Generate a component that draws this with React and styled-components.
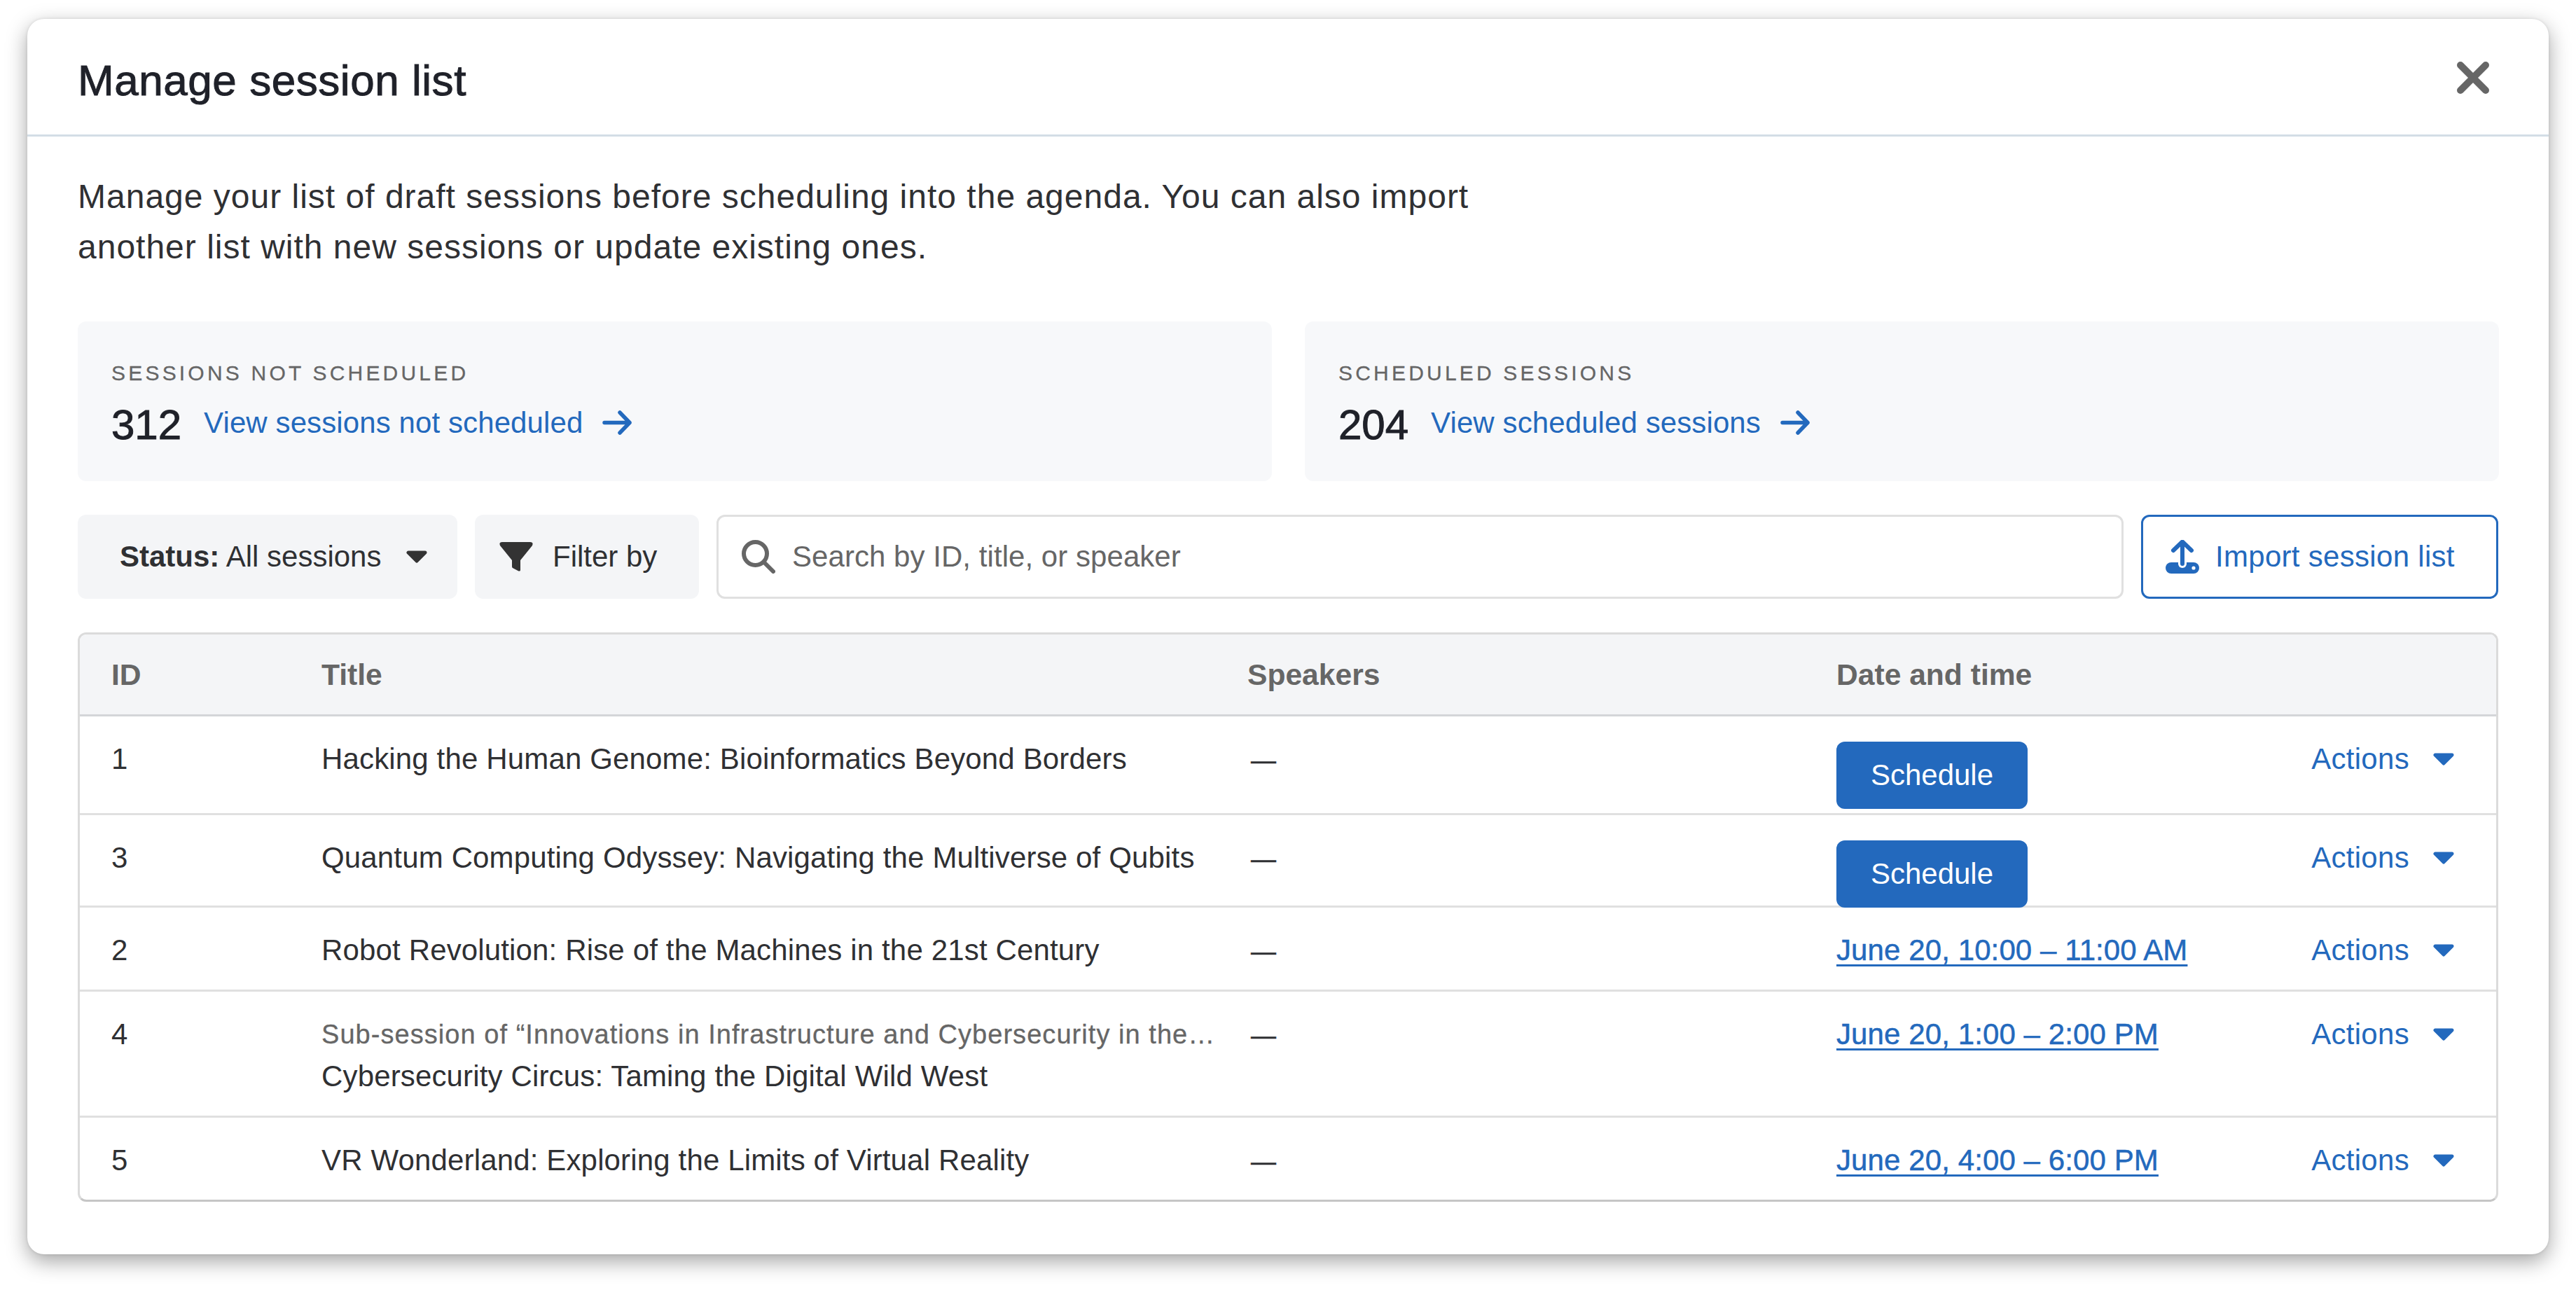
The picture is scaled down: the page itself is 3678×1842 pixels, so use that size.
import React from "react";
import styled, { createGlobalStyle, css } from "styled-components";

const Global = createGlobalStyle`
  html, body { margin: 0; padding: 0; background: #fff; }
  body { font-family: "Liberation Sans", Arial, sans-serif; }
  * { box-sizing: border-box; }
`;

const medium = css`
  -webkit-text-stroke: 1px currentColor;
`;

const BLUE = "#2369bd";

const Page = styled.div`
  width: 3678px;
  height: 1842px;
  padding: 27px 39px 51px;
  overflow: hidden;
`;

const Dialog = styled.section`
  width: 3600px;
  height: 1764px;
  background: #fff;
  border-radius: 24px;
  box-shadow: 0 10px 30px rgba(0, 0, 0, 0.36), 0 0 4px rgba(0, 0, 0, 0.1);
  display: flex;
  flex-direction: column;
`;

const Header = styled.header`
  height: 168px;
  flex: none;
  display: flex;
  justify-content: space-between;
  align-items: flex-start;
  padding: 48px 85px 0 72px;
  border-bottom: 3px solid #d3dde6;
`;

const Heading = styled.h1`
  margin: 0;
  font-size: 62px;
  line-height: 80px;
  font-weight: 400;
  color: #1f2129;
  ${medium}
  letter-spacing: 0.55px;
`;

const CloseButton = styled.button`
  margin-top: 13px;
  padding: 0;
  width: 46px;
  height: 46px;
  border: 0;
  background: none;
  display: block;
`;

const Body = styled.div`
  flex: 1;
  padding: 50px 72px 75px 72px;
  display: flex;
  flex-direction: column;
`;

const Intro = styled.p`
  margin: 0 0 70px;
  width: 2050px;
  font-size: 48px;
  line-height: 72px;
  color: #2f3033;
  letter-spacing: 1px;
`;

const Stats = styled.div`
  display: grid;
  grid-template-columns: 1705px 1705px;
  column-gap: 47px;
  margin-bottom: 48px;
`;

const StatCard = styled.div`
  height: 228px;
  background: #f7f8fa;
  border-radius: 12px;
  padding: 56px 48px 0;
`;

const StatLabel = styled.div`
  font-size: 30px;
  line-height: 36px;
  letter-spacing: 4.2px;
  color: #666;
  margin-bottom: 21px;
  -webkit-text-stroke: 0.3px currentColor;
`;

const StatRow = styled.div`
  height: 70px;
  display: flex;
  align-items: center;
  gap: 32px;
`;

const StatNumber = styled.span`
  font-size: 60px;
  line-height: 70px;
  color: #1f2129;
  ${medium}
`;

const StatLink = styled.a`
  display: inline-flex;
  align-items: center;
  gap: 28px;
  margin-bottom: 7px;
  font-size: 42px;
  line-height: 50px;
  color: ${BLUE};
  letter-spacing: 0.1px;
`;

const Toolbar = styled.div`
  display: flex;
  height: 120px;
  gap: 25px;
  margin-bottom: 48px;
`;

const GreyButton = styled.button`
  height: 120px;
  flex: none;
  border: 0;
  border-radius: 12px;
  background: #f4f5f7;
  display: flex;
  align-items: center;
  font-family: inherit;
  font-size: 42px;
  color: #2f3033;
`;

const StatusButton = styled(GreyButton)`
  width: 542px;
  padding: 0 43px 0 60px;
  justify-content: space-between;
  b {
    font-weight: 700;
  }
`;

const FilterButton = styled(GreyButton)`
  width: 320px;
  padding: 0 0 0 35px;
  gap: 28px;
`;

const SearchBox = styled.label`
  flex: 1;
  height: 120px;
  display: flex;
  align-items: center;
  gap: 24px;
  padding: 0 33px;
  border: 3px solid #e0e0e0;
  border-radius: 12px;
`;

const SearchInput = styled.input`
  flex: 1;
  border: 0;
  outline: 0;
  background: none;
  padding: 0;
  font-family: inherit;
  font-size: 42px;
  letter-spacing: 0.05px;
  color: #666;
  &::placeholder {
    color: #666;
    opacity: 1;
  }
`;

const ImportButton = styled.button`
  width: 510px;
  height: 120px;
  flex: none;
  border: 3px solid ${BLUE};
  border-radius: 12px;
  background: #fff;
  display: flex;
  align-items: center;
  gap: 23px;
  padding: 0 0 0 32px;
  font-family: inherit;
  font-size: 42px;
  letter-spacing: 0.3px;
  color: ${BLUE};
`;

const Table = styled.div`
  width: 3456px;
  border: 3px solid #dbdbdb;
  border-bottom-color: #c6c6c6;
  border-radius: 12px;
`;

const HeadRow = styled.div`
  height: 117px;
  display: grid;
  grid-template-columns: 300px 1322px 841px 1fr;
  align-items: center;
  padding-left: 45px;
  background: #f4f5f7;
  border-bottom: 3px solid #d4d5d8;
  border-radius: 9px 9px 0 0;
`;

const HeadCell = styled.div`
  font-size: 42.6px;
  font-weight: 700;
  color: #666;
`;

const Row = styled.div`
  height: ${(p) => p.$h}px;
  display: grid;
  grid-template-columns: 300px 1322px 841px 1fr auto;
  align-items: start;
  padding: 36px 60px 0 45px;
  border-bottom: 3px solid #e0e0e0;
  &:last-child {
    border-bottom: 0;
  }
`;

const Cell = styled.div`
  font-size: 42px;
  line-height: 50px;
  color: #2f3033;
  letter-spacing: 0.15px;
  white-space: nowrap;
`;

const Sub = styled.div`
  font-size: 38px;
  line-height: 50px;
  color: #666;
  letter-spacing: 1.05px;
  margin-bottom: 10px;
  -webkit-text-stroke: 0.3px currentColor;
`;

const Dash = styled.span`
  display: inline-block;
  padding-left: 5px;
  font-size: 36px;
  line-height: 44px;
  -webkit-text-stroke: 0.4px currentColor;
`;

const ScheduleButton = styled.button`
  position: relative;
  z-index: 1;
  width: 273px;
  height: 96px;
  border: 0;
  border-radius: 12px;
  background: ${BLUE};
  color: #fff;
  font-family: inherit;
  font-size: 42px;
  display: block;
`;

const DateLink = styled.a`
  color: ${BLUE};
  letter-spacing: 0.1px;
  text-decoration: underline;
  text-decoration-thickness: 3px;
  text-underline-offset: 6px;
  -webkit-text-stroke: 0.5px currentColor;
`;

const Actions = styled.a`
  display: flex;
  align-items: center;
  gap: 34px;
  color: ${BLUE};
  font-size: 42px;
  line-height: 50px;
  letter-spacing: 0.3px;
`;

const Caret = ({ color }) => (
  <svg width="30" height="18" viewBox="0 0 30 18" style={{ display: "block", flex: "none" }}>
    <path d="M3 3 H27 L15 15 Z" fill={color} stroke={color} strokeWidth="5" strokeLinejoin="round" />
  </svg>
);

const Arrow = () => (
  <svg width="42" height="35" viewBox="0 0 42 35" fill="none" stroke={BLUE} strokeWidth="5.5" strokeLinecap="round" strokeLinejoin="round">
    <path d="M3 17.5 H39 M25 3 L39 17.5 L25 32" />
  </svg>
);

const FilterIcon = () => (
  <svg width="48" height="42" viewBox="0 0 48 42" style={{ flex: "none" }}>
    <path
      d="M4 0 H44 Q49 0 47 5 L30 26 V40 Q30 42 27.5 41.5 L19 37 Q18 36.5 18 35 V26 L1 5 Q-1 0 4 0 Z"
      fill="#333"
    />
  </svg>
);

const SearchIcon = () => (
  <svg width="48" height="48" viewBox="0 0 48 48" fill="none" stroke="#666" strokeWidth="6" strokeLinecap="round" style={{ flex: "none" }}>
    <circle cx="19.5" cy="19.5" r="16.5" />
    <path d="M32 32 L45 45" />
  </svg>
);

const ImportIcon = () => (
  <svg width="48" height="48" viewBox="0 0 48 48" style={{ flex: "none" }}>
    <rect x="0" y="32" width="48" height="16" rx="8" fill={BLUE} />
    <circle cx="40" cy="40" r="2.6" fill="#fff" />
    <path d="M24 24 V34" stroke="#fff" strokeWidth="12" strokeLinecap="round" fill="none" />
    <path d="M24 3 V34 M11 15 L24 2.5 L37 15" stroke={BLUE} strokeWidth="6" strokeLinecap="round" strokeLinejoin="round" fill="none" />
  </svg>
);

const CloseIcon = () => (
  <svg width="46" height="46" viewBox="0 0 46 46" stroke="#666" strokeWidth="10" strokeLinecap="round" style={{ display: "block" }}>
    <path d="M5 5 L41 41 M41 5 L5 41" />
  </svg>
);

const rows = [
  { id: 1, h: 141, title: "Hacking the Human Genome: Bioinformatics Beyond Borders" },
  { id: 3, h: 132, title: "Quantum Computing Odyssey: Navigating the Multiverse of Qubits" },
  { id: 2, h: 120, title: "Robot Revolution: Rise of the Machines in the 21st Century", date: "June 20, 10:00 – 11:00 AM" },
  {
    id: 4,
    h: 180,
    sub: "Sub-session of “Innovations in Infrastructure and Cybersecurity in the…",
    title: "Cybersecurity Circus: Taming the Digital Wild West",
    date: "June 20, 1:00 – 2:00 PM",
  },
  { id: 5, h: 117, title: "VR Wonderland: Exploring the Limits of Virtual Reality", date: "June 20, 4:00 – 6:00 PM" },
];

export default function App() {
  return (
    <Page>
      <Global />
      <Dialog>
        <Header>
          <Heading>Manage session list</Heading>
          <CloseButton aria-label="Close">
            <CloseIcon />
          </CloseButton>
        </Header>
        <Body>
          <Intro>
            Manage your list of draft sessions before scheduling into the agenda. You can also import another list with
            new sessions or update existing ones.
          </Intro>
          <Stats>
            <StatCard>
              <StatLabel>SESSIONS NOT SCHEDULED</StatLabel>
              <StatRow>
                <StatNumber>312</StatNumber>
                <StatLink>
                  View sessions not scheduled <Arrow />
                </StatLink>
              </StatRow>
            </StatCard>
            <StatCard>
              <StatLabel>SCHEDULED SESSIONS</StatLabel>
              <StatRow>
                <StatNumber>204</StatNumber>
                <StatLink>
                  View scheduled sessions <Arrow />
                </StatLink>
              </StatRow>
            </StatCard>
          </Stats>
          <Toolbar>
            <StatusButton>
              <span>
                <b>Status:</b> All sessions
              </span>
              <Caret color="#333" />
            </StatusButton>
            <FilterButton>
              <FilterIcon />
              Filter by
            </FilterButton>
            <SearchBox>
              <SearchIcon />
              <SearchInput placeholder="Search by ID, title, or speaker" />
            </SearchBox>
            <ImportButton>
              <ImportIcon />
              Import session list
            </ImportButton>
          </Toolbar>
          <Table>
            <HeadRow>
              <HeadCell>ID</HeadCell>
              <HeadCell>Title</HeadCell>
              <HeadCell>Speakers</HeadCell>
              <HeadCell>Date and time</HeadCell>
            </HeadRow>
            {rows.map((r) => (
              <Row key={r.id} $h={r.h}>
                <Cell>{r.id}</Cell>
                <Cell>
                  {r.sub && <Sub>{r.sub}</Sub>}
                  {r.title}
                </Cell>
                <Cell>
                  <Dash>—</Dash>
                </Cell>
                <Cell>{r.date ? <DateLink>{r.date}</DateLink> : <ScheduleButton>Schedule</ScheduleButton>}</Cell>
                <Actions>
                  Actions <Caret color={BLUE} />
                </Actions>
              </Row>
            ))}
          </Table>
        </Body>
      </Dialog>
    </Page>
  );
}
